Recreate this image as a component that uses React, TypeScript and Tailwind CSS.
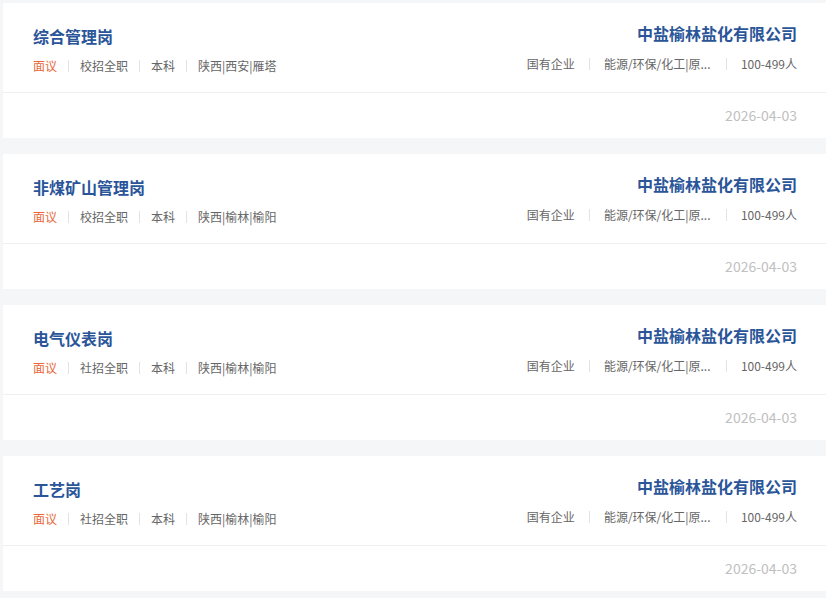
const jobs = [
  { title: "综合管理岗", type: "校招全职", place: "陕西|西安|雁塔" },
  { title: "非煤矿山管理岗", type: "校招全职", place: "陕西|榆林|榆阳" },
  { title: "电气仪表岗", type: "社招全职", place: "陕西|榆林|榆阳" },
  { title: "工艺岗", type: "社招全职", place: "陕西|榆林|榆阳" },
];

function Sep({ wide }: { wide?: boolean }) {
  return (
    <span
      className={
        wide
          ? "mx-[14px] inline-block h-[12px] w-px bg-[#e3e3e3]"
          : "mx-[11px] inline-block h-[12px] w-px bg-[#e3e3e3]"
      }
    />
  );
}

function JobCard({ job }: { job: (typeof jobs)[number] }) {
  return (
    <div className="h-[135px] w-full bg-white">
      <div className="flex h-[90px] justify-between border-b border-[#f0f0f0] pl-[30px] pr-[29px]">
        {/* left: title + tags */}
        <div className="flex flex-col pt-[21px]">
          <div className="text-[16px] font-bold leading-6 text-[#2a5599]">{job.title}</div>
          <div className="mt-[9px] flex items-center text-[12px] leading-[18px] text-[#666666]">
            <span className="text-[#e8673a]">面议</span>
            <Sep />
            <span>{job.type}</span>
            <Sep />
            <span>本科</span>
            <Sep />
            <span>{job.place}</span>
          </div>
        </div>

        {/* right: company */}
        <div className="flex flex-col items-end pt-[18px]">
          <div className="text-[16px] font-bold leading-6 text-[#2a5599]">中盐榆林盐化有限公司</div>
          <div className="mt-[10px] flex items-center text-[12px] leading-[18px] text-[#666666]">
            <span>国有企业</span>
            <Sep wide />
            <span className="inline-block w-[108px] whitespace-nowrap">能源/环保/化工|原...</span>
            <Sep wide />
            <span>100-499人</span>
          </div>
        </div>
      </div>
      <div className="flex h-[44px] items-center justify-end pr-[29px] text-[14px] text-[#c0c0c0]">
        2026-04-03
      </div>
    </div>
  );
}

export default function App() {
  return (
    <div
      className="flex min-h-[598px] flex-col gap-[16px] bg-[#f5f6f7] pl-[3px] pt-[3px]"
      style={{ fontFamily: '"Noto Sans CJK SC", "Noto Sans", sans-serif' }}
    >
      {jobs.map((job) => (
        <JobCard key={job.title} job={job} />
      ))}
    </div>
  );
}
